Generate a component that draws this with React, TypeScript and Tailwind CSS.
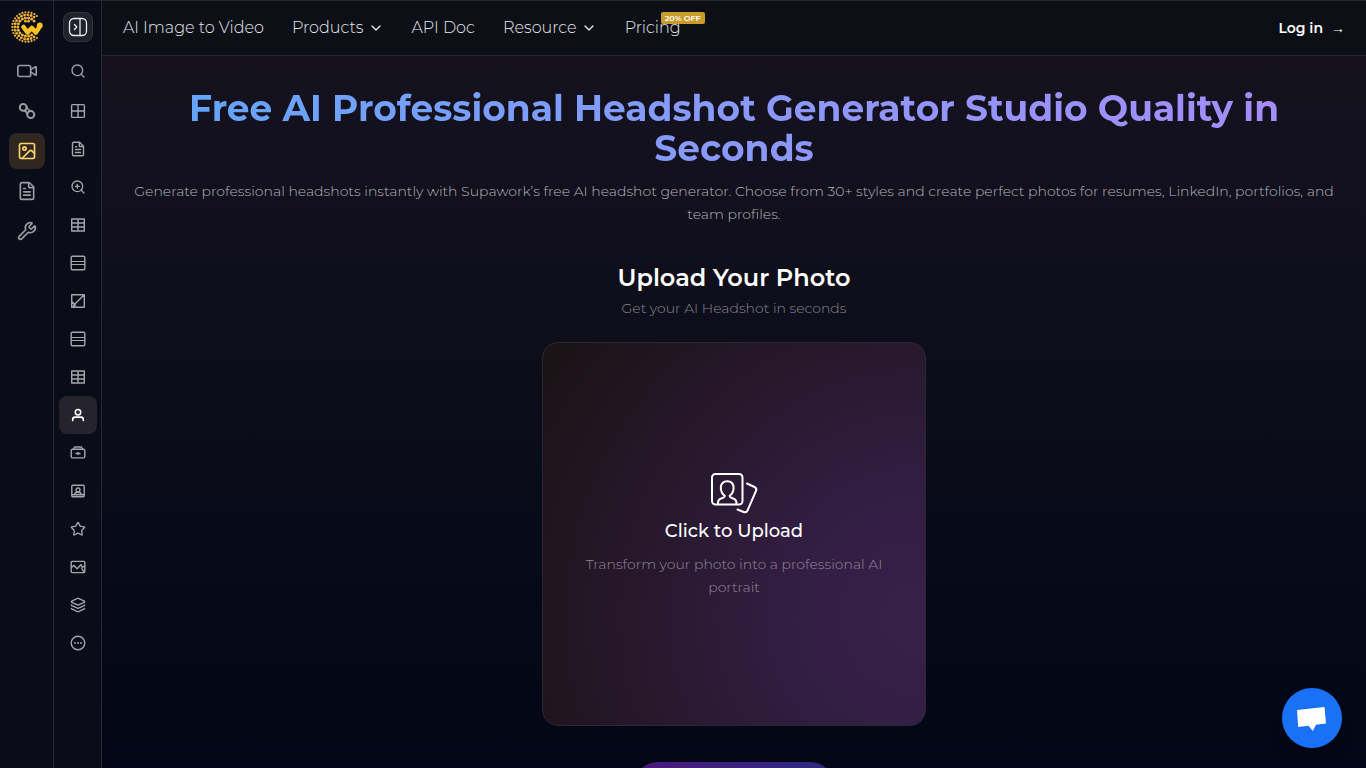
import React from 'react';
import {
  ChevronDown,
  FileText,
  Image as ImageIcon,
  Layers,
  Search,
  Star,
  Video,
  Wrench,
  ZoomIn,
} from 'lucide-react';

interface RailItem {
  id: string;
  label: string;
  icon: React.ReactNode;
  active?: boolean;
}

function Glyph({ children }: { children: React.ReactNode }) {
  return (
    <svg viewBox="0 0 16 16" className="w-4 h-4" fill="none" stroke="currentColor" strokeWidth="1.4" strokeLinejoin="round" strokeLinecap="round">
      {children}
    </svg>
  );
}

const tableIcon = (
  <Glyph>
    <path d="M1.7 2h12.6v12H1.7zM1.7 6h12.6M1.7 10h12.6M8 2v12" />
  </Glyph>
);

const rowsIcon = (
  <Glyph>
    <rect x="1.2" y="1.2" width="13.6" height="13.6" rx="1.2" />
    <path d="M1.2 6.500h13.6M1.2 9.500h13.6" strokeWidth="1" />
  </Glyph>
);

const categories: RailItem[] = [
  { id: 'video', label: 'Video', icon: <Video className="w-[22px] h-[22px]" strokeWidth={1.8} /> },
  {
    id: 'effects',
    label: 'Effects',
    icon: (
      <svg viewBox="0 0 20 20" className="w-5 h-5" fill="none" stroke="currentColor" strokeWidth="2">
        <circle cx="6.2" cy="6.4" r="3.4" />
        <circle cx="13.8" cy="13.6" r="3.5" />
        <path d="M9.4 5.2l1.8 3.4M7 10l3.4 1.2M11.2 8.6l2.4 1.4M8.400 9.4l1.8 4.200" strokeWidth="1.5" />
      </svg>
    ),
  },
  { id: 'image', label: 'Image', icon: <ImageIcon className="w-5 h-5" />, active: true },
  { id: 'document', label: 'Document', icon: <FileText className="w-5 h-5" /> },
  { id: 'tools', label: 'Tools', icon: <Wrench className="w-5 h-5" /> },
];

const tools: RailItem[] = [
  {
    id: 'grid',
    label: 'Grid',
    icon: (
      <Glyph>
        <rect x="1.6" y="1.6" width="12.8" height="12.8" rx="1" />
        <path d="M8 1.6v12.8M1.6 8h12.8" />
      </Glyph>
    ),
  },
  {
    id: 'notes',
    label: 'Notes',
    icon: (
      <Glyph>
        <path d="M9.500 1.300H3.700c-.7 0-1.200.5-1.200 1.200v11c0 .7.500 1.200 1.200 1.200h8.600c.7 0 1.200-.5 1.200-1.200V5.300zM9.300 1.500v4h4M5.500 8.500h5M5.500 11.500h5M5.500 5.800h1" />
      </Glyph>
    ),
  },
  { id: 'upscale', label: 'Upscale', icon: <ZoomIn className="w-4 h-4" /> },
  { id: 'table', label: 'Table', icon: tableIcon },
  { id: 'rows', label: 'Rows', icon: rowsIcon },
  {
    id: 'erase',
    label: 'Erase',
    icon: (
      <Glyph>
        <path d="M1.7 1.7h12.6v12.6H1.7zM3.4 12.6L14 2M1.9 8.8l3.6 3.2-1.8 1.8" />
      </Glyph>
    ),
  },
  { id: 'banner', label: 'Banner', icon: rowsIcon },
  { id: 'sheet', label: 'Sheet', icon: tableIcon },
  {
    id: 'headshot',
    label: 'Headshot',
    active: true,
    icon: (
      <Glyph>
        <circle cx="8" cy="5.2" r="2.7" strokeWidth="1.6" />
        <path d="M2.7 13.6v-1c0-1.5 1.1-2.5 2.5-2.5h5.6c1.4 0 2.5 1 2.5 2.5v1" strokeWidth="1.6" />
      </Glyph>
    ),
  },
  {
    id: 'outfit',
    label: 'Outfit',
    icon: (
      <Glyph>
        <rect x="1.2" y="4.2" width="13.6" height="8.7" rx="1.4" />
        <path d="M3.6 4l1-2h6.8l1 2M6 8.500h4M8 7.500v2" />
      </Glyph>
    ),
  },
  {
    id: 'passport',
    label: 'Passport',
    icon: (
      <Glyph>
        <rect x="1.8" y="2.2" width="12.4" height="11.6" rx="1" />
        <circle cx="8" cy="7" r="2" />
        <path d="M4.400 11.600c.4-1.600 1.600-2.400 3.600-2.400s3.200.8 3.600 2.400M2.200 11.800h11.600" />
      </Glyph>
    ),
  },
  { id: 'favorites', label: 'Favorites', icon: <Star className="w-4 h-4" /> },
  {
    id: 'restore',
    label: 'Restore',
    icon: (
      <Glyph>
        <rect x="1.2" y="2.400" width="13.6" height="11.200" rx="1" />
        <path d="M1.500 8.200l2.500-1.800 3.200 3.400 3.800-4.300 1.200 3 2.200-1.500" />
        <path d="M11.800 9.500l2.400 3.800" />
      </Glyph>
    ),
  },
  { id: 'layers', label: 'Layers', icon: <Layers className="w-4 h-4" /> },
  {
    id: 'more',
    label: 'More',
    icon: (
      <Glyph>
        <circle cx="8" cy="8" r="6.800" />
        <path d="M5 8h.01M8 8h.01M11 8h.01" strokeWidth="1.900" />
      </Glyph>
    ),
  },
];

// Concentric rings of dots, open on the right where the W sits
const logoDots = [2.5, 6, 9.2, 12.2, 14.8].flatMap((radius, ring) => {
  const count = [5, 12, 18, 23, 30][ring];
  return Array.from({ length: count }, (_, i) => {
    const angle = ((i + (ring % 2) / 2) / count) * Math.PI * 2;
    return { x: 16 + radius * Math.cos(angle), y: 16 + radius * Math.sin(angle), r: [1.3, 1.4, 1.5, 1.4, 1.1][ring] };
  });
}).filter(({ x, y }) => !(x > 25 && y > 7 && y < 25) && !(x > 10 && y > 11.5 && y < 23.5));

function Logo() {
  return (
    <svg viewBox="0 0 32 32" className="w-8 h-8" fill="#eeb23a">
      {logoDots.map(({ x, y, r }) => (
        <circle key={`${x}-${y}`} cx={x} cy={y} r={r} />
      ))}
      <path d="M12.500 16l4 5.500 4.300-4.500 4 4.500 3-4.500" fill="none" stroke="#ffc21f" strokeWidth="4.600" strokeLinejoin="round" strokeLinecap="round" />
      <circle cx="28.800" cy="14.500" r="2.900" fill="#ffc21f" />
    </svg>
  );
}

function UploadIcon() {
  return (
    <svg viewBox="0 0 48 42" className="w-12 h-[42px]" fill="none" stroke="white" strokeWidth="2" strokeLinecap="round" strokeLinejoin="round">
      <rect x="2" y="2" width="30.5" height="30.5" rx="3.5" />
      <path d="M8 32v-1.5c0-2.5 1.5-3.7 4-4.3 2-.5 2.7-1.2 2.7-2.4-2.5-2-3.9-4.7-3.9-7.8 0-4.3 2.5-6.8 6.4-6.8s6.4 2.5 6.4 6.8c0 3.1-1.4 5.8-3.9 7.8 0 1.2.7 1.9 2.7 2.4 2.5.6 4 1.8 4 4.3V32" />
      <path d="M37 11.5l7.5 3.5c1.8.9 2.3 2.2 1.5 3.9l-8.5 19.6c-.7 1.6-2 2.2-3.7 1.5L27.5 37.5" />
    </svg>
  );
}

export default function App() {
  return (
    <div className="h-screen flex overflow-hidden bg-[#0a0c17] border-t border-[#24252d] text-white font-['Montserrat','Inter',sans-serif]">
      {/* Category rail */}
      <nav aria-label="Categories" className="w-[54px] shrink-0 border-r border-[#262832] flex flex-col items-center gap-1 pt-[10px]">
        <a href="#home" aria-label="Home" className="mb-[6px]">
          <Logo />
        </a>
        {categories.map((item) => (
          <button
            key={item.id}
            aria-label={item.label}
            className={
              item.active
                ? 'w-9 h-9 rounded-lg flex items-center justify-center bg-[#302820] text-[#fcd36b]'
                : 'w-9 h-9 rounded-lg flex items-center justify-center text-[#9a9da6]'
            }
          >
            {item.icon}
          </button>
        ))}
      </nav>

      {/* Tool rail */}
      <nav aria-label="Image tools" className="w-12 shrink-0 border-r border-[#262832] flex flex-col items-center pt-[11px]">
        <button aria-label="Expand menu" className="w-[30px] h-[30px] rounded-lg border border-[#34363f] bg-[#20212b] flex items-center justify-center">
          <svg viewBox="0 0 20 20" className="w-5 h-5 shrink-0" fill="none" stroke="#e8e9ec" strokeWidth="1.3" strokeLinecap="round" strokeLinejoin="round">
            <rect x="1.5" y="1.5" width="17" height="17" rx="4.500" />
            <path d="M12 1.5v17M6.5 7.5l2.3 2.5-2.3 2.5" />
          </svg>
        </button>
        <button aria-label="Search" className="w-[38px] h-[38px] mt-[10px] mb-0.5 flex items-center justify-center text-[#a3a5ad]">
          <Search className="w-4 h-4" />
        </button>
        {tools.map((item) => (
          <button
            key={item.id}
            aria-label={item.label}
            className={
              item.active
                ? 'w-[38px] h-[38px] rounded-lg flex items-center justify-center bg-[#24232e] text-white'
                : 'w-[38px] h-[38px] rounded-lg flex items-center justify-center text-[#a3a5ad]'
            }
          >
            {item.icon}
          </button>
        ))}
      </nav>

      <div className="flex-1 min-w-0 flex flex-col">
        <header className="h-[55px] shrink-0 bg-[#0c0f16] border-b border-[#262630] flex items-center justify-between pl-[21px] pr-[21px]">
          <nav aria-label="Main" className="flex items-center gap-7 text-base font-light text-[#e6e7ea]">
            <a href="#video">AI Image to Video</a>
            <button className="flex items-center gap-1">
              Products <ChevronDown className="w-4 h-4" />
            </button>
            <a href="#api">API Doc</a>
            <button className="flex items-center gap-1">
              Resource <ChevronDown className="w-4 h-4" />
            </button>
            <a href="#pricing" className="relative">
              Pricing
              <span className="absolute left-9 -top-1 h-3 px-1 rounded-xs bg-[#c99a2c] text-white text-[8px] leading-3 font-semibold whitespace-nowrap">
                20% OFF
              </span>
            </a>
          </nav>
          <a href="#login" className="flex items-center gap-2 text-sm font-semibold">
            Log in <span className="font-['Liberation_Sans',sans-serif] font-normal">→</span>
          </a>
        </header>

        <main className="flex-1 min-h-0 overflow-y-auto [scrollbar-width:none] bg-linear-to-b from-[#15121e] via-[#0d0e1a] via-40% to-[#030616] px-8 pt-8 flex flex-col items-center text-center">
          <h1 className="text-4xl leading-10 font-bold bg-linear-to-r from-[#60a5fa] to-[#a78bfa] bg-clip-text text-transparent">
            Free AI Professional Headshot Generator Studio Quality in Seconds
          </h1>
          <p className="mt-3 text-sm leading-[23px] font-light text-[#b4b5bd]">
            Generate professional headshots instantly with Supawork’s free AI headshot generator. Choose from 30+ styles and create perfect photos for resumes, LinkedIn, portfolios, and team profiles.
          </p>

          <h2 className="mt-9 text-2xl leading-8 font-semibold">Upload Your Photo</h2>
          <p className="mt-1 text-sm leading-5 font-light text-[#858894]">Get your AI Headshot in seconds</p>

          <button className="mt-6 w-full max-w-96 aspect-square shrink-0 rounded-2xl border border-[#2d2732] bg-[radial-gradient(circle_at_98%_72%,#38204a_0%,#331e44_25%,#27182c_60%,#1a1214_100%)] px-8 pt-[3px] flex flex-col items-center justify-center">
            <UploadIcon />
            <span className="mt-[3px] text-lg leading-7 font-medium">Click to Upload</span>
            <span className="mt-2 text-sm leading-[23px] font-light text-[#8f8896]">
              Transform your photo into a professional AI portrait
            </span>
          </button>

          <button aria-label="Generate" className="mt-9 w-50 h-12 shrink-0 rounded-3xl bg-linear-to-r from-[#4b167c] to-[#2b2a80]" />
        </main>
      </div>

      {/* Chat launcher */}
      <button aria-label="Open chat" className="fixed right-6 bottom-5 w-15 h-15 rounded-full bg-[#1972f5] shadow-lg flex items-center justify-center">
        <svg viewBox="0 0 60 60" className="w-15 h-15" fill="white">
          <path d="M15 22l27.5-3 1.5 16.5-10 1.2-3.2 6.3-4.3-5.3-10.3 1.3z" />
        </svg>
      </button>
    </div>
  );
}
